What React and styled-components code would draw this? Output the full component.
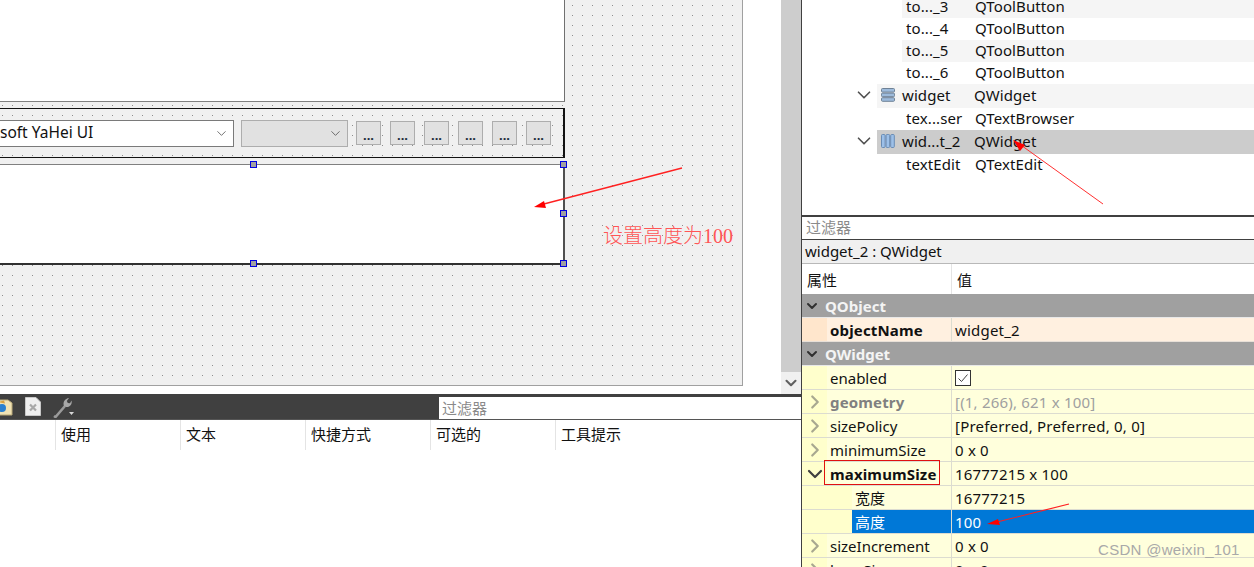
import React from "react";
import styled, { createGlobalStyle } from "styled-components";
import { ChevronDown, ChevronRight } from "lucide-react";

const GlobalStyle = createGlobalStyle`
  html, body {
    margin: 0;
    padding: 0;
    background: #fff;
  }
  body {
    font-family: "Noto Sans", "Noto Sans CJK SC", sans-serif;
    font-size: 15px;
    color: #111;
  }
`;

const Page = styled.div`
  position: relative;
  width: 1254px;
  height: 567px;
  overflow: hidden;
  display: flex;
  background: #fff;
`;

const LeftColumn = styled.div`
  width: 801px;
  flex: none;
  display: flex;
  flex-direction: column;
`;

const RightColumn = styled.div`
  flex: 1;
  min-width: 0;
  display: flex;
  flex-direction: column;
  border-left: 1px solid #404040;
`;

const DesignArea = styled.div`
  height: 394px;
  flex: none;
  display: flex;
  overflow: hidden;
`;

const Canvas = styled.div`
  width: 742px;
  height: 385px;
  flex: none;
  display: flex;
  flex-direction: column;
  background-color: #f0f0f0;
  background-image: radial-gradient(circle at 2.5px 5.5px, #8e8e8e 0.75px, transparent 0.8px);
  background-size: 10px 10px;
  border-right: 1px solid #a0a0a0;
  border-bottom: 1px solid #a0a0a0;
`;

const Gutter = styled.div`
  width: 38px;
  flex: none;
`;

const Scrollbar = styled.div`
  width: 20px;
  flex: none;
  display: flex;
  flex-direction: column;
`;

const ScrollThumb = styled.div`
  flex: 1;
  background: #cdcdcd;
`;

const ScrollButton = styled.div`
  height: 22px;
  display: flex;
  align-items: center;
  justify-content: center;
  background: #f0f0f0;
  color: #606060;
`;

const Form = styled.div`
  width: 565px;
  display: flex;
  flex-direction: column;
`;

const TopWidget = styled.div`
  height: 101px;
  background: #fff;
  border-right: 1px solid #707070;
  border-bottom: 1px solid #808080;
`;

const ToolRow = styled.div`
  height: 48px;
  margin-top: 6px;
  box-sizing: content-box;
  display: flex;
  align-items: center;
  border-top: 1px solid #111;
  border-bottom: 1px solid #111;
  border-right: 2px solid #111;
  overflow: hidden;
`;

const FontCombo = styled.div`
  width: 233px;
  height: 25px;
  flex: none;
  box-sizing: content-box;
  display: flex;
  align-items: center;
  justify-content: space-between;
  overflow: hidden;
  background: #fff;
  border: 1px solid #7a7a7a;
  border-left: 0;
  padding-right: 0;
`;

const ComboText = styled.span`
  margin-left: -41px;
  margin-bottom: 2px;
  font-size: 15.5px;
  white-space: nowrap;
`;

const SizeCombo = styled.div`
  width: 105px;
  height: 25px;
  flex: none;
  margin-left: 7px;
  display: flex;
  align-items: center;
  justify-content: flex-end;
  background: #e1e1e1;
  border: 1px solid #adadad;
`;

const ComboArrow = styled.span`
  display: flex;
  margin-right: 4px;
  color: #444;
`;

const DotsButton = styled.div`
  width: 23px;
  height: 22px;
  flex: none;
  margin-left: ${(p) => (p.$first ? "8px" : "9px")};
  display: flex;
  align-items: flex-end;
  justify-content: center;
  background: #e1e1e1;
  border: 1px solid #adadad;
  font-size: 13px;
  line-height: 18px;
  font-weight: 700;
  color: #1a2a3a;
`;

const SelectedWidget = styled.div`
  position: relative;
  height: 98px;
  margin-top: 6px;
  background: #fff;
  border-top: 1px solid #808080;
  border-right: 2px solid #505050;
  border-bottom: 2px solid #303030;
`;

const Handle = styled.span`
  position: absolute;
  width: 5px;
  height: 5px;
  background: #a0a0a0;
  border: 1px solid #0000e0;
  left: ${(p) => p.$x}px;
  top: ${(p) => p.$y}px;
`;

const ActionPanel = styled.div`
  flex: 1;
  display: flex;
  flex-direction: column;
`;

const ActionToolbar = styled.div`
  height: 25px;
  flex: none;
  display: flex;
  align-items: center;
  background: #404040;
  overflow: hidden;
`;

const ToolIcon = styled.svg`
  flex: none;
  margin-left: ${(p) => p.$gap}px;
`;

const ActionFilter = styled.div`
  width: 362px;
  height: 22px;
  margin-left: auto;
  margin-top: 2px;
  padding-left: 3px;
  box-sizing: border-box;
  background: #fff;
  color: #8a8a8a;
  font-size: 15px;
  line-height: 22px;
`;

const ActionHeader = styled.div`
  height: 30px;
  display: flex;
  border-top: 1px solid #555;
`;

const HeaderCell = styled.div`
  width: ${(p) => p.$width}px;
  flex: none;
  box-sizing: border-box;
  padding-left: 5px;
  border-right: ${(p) => (p.$last ? "0" : "1px solid #e4e4e4")};
  font-size: 15px;
  line-height: 28px;
`;

const TreePane = styled.div`
  height: 215px;
  flex: none;
  overflow: hidden;
  border-bottom: 2px solid #404040;
`;

const TreeScroll = styled.div`
  margin-top: -4px;
`;

const TreeLine = styled.div`
  display: flex;
  height: ${(p) => p.$height}px;
`;

const TreeGutter = styled.div`
  width: ${(p) => (p.$leaf ? 100 : 75)}px;
  flex: none;
  display: flex;
  align-items: center;
  justify-content: flex-end;
  padding-right: 2px;
  padding-bottom: 2px;
  box-sizing: border-box;
  color: #505050;
`;

const TreeBody = styled.div`
  flex: 1;
  display: flex;
  align-items: center;
  padding-bottom: 2px;
  box-sizing: border-box;
  background: ${(p) => (p.$selected ? "#cccccc" : p.$alt ? "#f5f5f5" : "#fff")};
`;

const TreeIcon = styled.svg`
  margin-left: 4px;
  flex: none;
`;

const TreeName = styled.span`
  width: ${(p) => p.$width}px;
  flex: none;
  padding-left: ${(p) => p.$pad}px;
  box-sizing: border-box;
  white-space: nowrap;
  letter-spacing: 0.1px;
`;

const TreeClass = styled.span`
  white-space: nowrap;
  letter-spacing: 0.1px;
`;

const FilterBox = styled.div`
  height: 22px;
  flex: none;
  padding-left: 4px;
  background: #fff;
  color: #8a8a8a;
  font-size: 15px;
  line-height: 21px;
  border-bottom: 1px solid #404040;
`;

const ClassLabel = styled.div`
  height: 23px;
  flex: none;
  padding-left: 3px;
  background: #f0f0f0;
  line-height: 23px;
  border-bottom: 1px solid #b8b8b8;
`;

const PropertyHeader = styled.div`
  height: 30px;
  flex: none;
  display: flex;
  line-height: 32px;
`;

const PropertyHeadCell = styled.div`
  box-sizing: border-box;
  padding-left: ${(p) => p.$pad}px;
  width: ${(p) => p.$width || "auto"};
  border-right: ${(p) => (p.$split ? "1px solid #e4e4e4" : "0")};
`;

const SectionRow = styled.div`
  height: 23px;
  flex: none;
  display: flex;
  align-items: center;
  background: #a0a0a0;
  border-bottom: 1px solid #e8e8e8;
  color: #f4f4f4;
  font-weight: 700;
`;

const SectionArrow = styled.span`
  width: 19px;
  margin-right: 4px;
  flex: none;
  display: flex;
  justify-content: center;
  color: #303030;
`;

const PropRow = styled.div`
  height: 23px;
  flex: none;
  display: flex;
  background: ${(p) => (p.$tone === "peach" ? "#fff0e0" : "#ffffdc")};
  border-bottom: 1px solid ${(p) => (p.$tone === "peach" ? "#e8e0d8" : "#dcdcd0")};
`;

const PropIndent = styled.div`
  width: ${(p) => (p.$deep ? 50 : 25)}px;
  flex: none;
  display: flex;
  align-items: center;
  justify-content: center;
  background: ${(p) => (p.$tone === "peach" ? "#ffe6cc" : "#ffffcc")};
  color: ${(p) => (p.$open ? "#404040" : "#a8a890")};
`;

const PropName = styled.div`
  flex: 1;
  display: flex;
  align-items: center;
  padding-left: 3px;
  white-space: nowrap;
  font-weight: ${(p) => (p.$bold ? 700 : 400)};
  letter-spacing: ${(p) => (p.$bold ? "0.15px" : "0")};
  color: ${(p) => (p.$muted ? "#808080" : p.$selected ? "#fff" : "#111")};
  background: ${(p) => (p.$selected ? "#0078d7" : "transparent")};
`;

const NameColumn = styled.div`
  width: 149px;
  flex: none;
  display: flex;
  border-right: 1px solid #dcdcd0;
`;

const PropValue = styled.div`
  flex: 1;
  display: flex;
  align-items: center;
  padding-left: 3px;
  white-space: nowrap;
  letter-spacing: 0.2px;
  color: ${(p) => (p.$muted ? "#a0a0a0" : p.$selected ? "#fff" : "#111")};
  background: ${(p) => (p.$selected ? "#0078d7" : "transparent")};
`;

const CheckBox = styled.span`
  width: 14px;
  height: 14px;
  display: flex;
  background: #fff;
  border: 1px solid #333;
`;

const Overlay = styled.svg`
  position: absolute;
  left: 0;
  top: 0;
  pointer-events: none;
`;

const Note = styled.div`
  position: absolute;
  left: 603px;
  top: 220px;
  color: #ff5555;
  font-family: "Liberation Serif", "Noto Sans CJK SC", serif;
  font-size: 20px;
  font-weight: 300;
  white-space: nowrap;
`;

const Watermark = styled.div`
  position: absolute;
  left: 1098px;
  top: 541px;
  color: #a9a9a9;
  font-family: "Liberation Sans", sans-serif;
  font-size: 15px;
  letter-spacing: 0.3px;
  white-space: nowrap;
`;

const treeRows = [
  { name: "to..._3", type: "QToolButton", height: 22, alt: true, leaf: true },
  { name: "to..._4", type: "QToolButton", height: 22, leaf: true },
  { name: "to..._5", type: "QToolButton", height: 22, alt: true, leaf: true },
  { name: "to..._6", type: "QToolButton", height: 22, leaf: true },
  { name: "widget", type: "QWidget", height: 24, alt: true, icon: "rows" },
  { name: "tex...ser", type: "QTextBrowser", height: 22, leaf: true },
  { name: "wid...t_2", type: "QWidget", height: 24, selected: true, icon: "cols" },
  { name: "textEdit", type: "QTextEdit", height: 22, leaf: true },
];

const headers = [
  { label: "", width: 56 },
  { label: "使用", width: 125 },
  { label: "文本", width: 125 },
  { label: "快捷方式", width: 125 },
  { label: "可选的", width: 125 },
  { label: "工具提示", width: 245, last: true },
];

function LayoutIcon({ kind }) {
  const bars = [0, 1, 2];
  return (
    <TreeIcon width="14" height="14" viewBox="0 0 14 14">
      {bars.map((i) =>
        kind === "rows" ? (
          <rect key={i} x="0.5" y={0.5 + i * 4.6} width="13" height="3.6" rx="1" fill="#9dbbdc" stroke="#6f8296" />
        ) : (
          <rect key={i} x={0.5 + i * 4.6} y="0.5" width="3.6" height="13" rx="1" fill="#9dc0e8" stroke="#6a8cb4" />
        )
      )}
    </TreeIcon>
  );
}

function Property({ name, value, bold, muted, arrow, deep, selected, tone, check }) {
  return (
    <PropRow $tone={tone}>
      <NameColumn>
        <PropIndent $deep={deep} $tone={tone} $open={arrow === "open"}>
          {arrow === "open" && <ChevronDown size={24} strokeWidth={2.2} />}
          {arrow === "closed" && <ChevronRight size={22} strokeWidth={2.4} />}
        </PropIndent>
        <PropName $bold={bold} $muted={muted} $selected={selected}>{name}</PropName>
      </NameColumn>
      <PropValue $muted={muted} $selected={selected}>
        {check ? (
          <CheckBox>
            <svg width="14" height="14" viewBox="0 0 14 14">
              <path d="M2.5 7.5 L5.5 10.5 L11.5 3.5" fill="none" stroke="#444" strokeWidth="1" />
            </svg>
          </CheckBox>
        ) : (
          value
        )}
      </PropValue>
    </PropRow>
  );
}

export default function App() {
  return (
    <Page>
      <GlobalStyle />
      <LeftColumn>
        <DesignArea>
          <Canvas>
            <Form>
              <TopWidget />
              <ToolRow>
                <FontCombo>
                  <ComboText>Microsoft YaHei UI</ComboText>
                  <ComboArrow><ChevronDown size={15} strokeWidth={1.2} /></ComboArrow>
                </FontCombo>
                <SizeCombo>
                  <ComboArrow><ChevronDown size={15} strokeWidth={1.2} /></ComboArrow>
                </SizeCombo>
                {[0, 1, 2, 3, 4, 5].map((i) => (
                  <DotsButton key={i} $first={i === 0}>...</DotsButton>
                ))}
              </ToolRow>
              <SelectedWidget>
                <Handle $x={250} $y={-4} />
                <Handle $x={560} $y={-4} />
                <Handle $x={560} $y={45} />
                <Handle $x={250} $y={95} />
                <Handle $x={560} $y={95} />
              </SelectedWidget>
            </Form>
          </Canvas>
          <Gutter />
          <Scrollbar>
            <ScrollThumb />
            <ScrollButton><ChevronDown size={18} strokeWidth={2.8} /></ScrollButton>
          </Scrollbar>
        </DesignArea>
        <ActionPanel>
          <ActionToolbar>
            <ToolIcon $gap={0} width="13" height="18" viewBox="0 0 13 18">
              <path d="M-4 2 H8 L12 5 V17 H-4 Z" fill="#f0e2b4" stroke="#b8a878" />
              <circle cx="2" cy="10" r="4" fill="#2a80d0" />
              <path d="M-2 4 L4 2.5 L5 5.5 Z" fill="#d8a040" />
            </ToolIcon>
            <ToolIcon $gap={12} width="16" height="19" viewBox="0 0 16 19">
              <path d="M0.5 0.5 H11 L15.5 5 V18.5 H0.5 Z" fill="#efefef" stroke="#c8c8c8" />
              <path d="M5 7.5 L11 13.5 M11 7.5 L5 13.5" stroke="#a8a8a8" strokeWidth="2.2" />
            </ToolIcon>
            <ToolIcon $gap={11} width="22" height="22" viewBox="0 0 22 22">
              <path d="M2 20 L3.5 21 L13 10" fill="none" stroke="#9a9a9a" strokeWidth="2.6" />
              <path d="M12 10 C10.5 6 13 2.5 17 2 L14.8 5 L15.8 7 L18 7.2 L19.5 4.5 C20.5 8 18 11.5 14 11 Z" fill="#a8a8a8" />
              <path d="M17 16 H22 L19.5 19 Z" fill="#d8d8d8" />
            </ToolIcon>
            <ActionFilter>过滤器</ActionFilter>
          </ActionToolbar>
          <ActionHeader>
            {headers.map((h) => (
              <HeaderCell key={h.width + h.label} $width={h.width} $last={h.last}>{h.label}</HeaderCell>
            ))}
          </ActionHeader>
        </ActionPanel>
      </LeftColumn>
      <RightColumn>
        <TreePane>
          <TreeScroll>
            {treeRows.map((row) => (
              <TreeLine key={row.name} $height={row.height}>
                <TreeGutter $leaf={row.leaf}>
                  {!row.leaf && <ChevronDown size={22} strokeWidth={1.8} />}
                </TreeGutter>
                <TreeBody $alt={row.alt} $selected={row.selected}>
                  {row.icon && <LayoutIcon kind={row.icon} />}
                  <TreeName $width={row.leaf ? 73 : 79} $pad={row.leaf ? 4 : 7}>{row.name}</TreeName>
                  <TreeClass>{row.type}</TreeClass>
                </TreeBody>
              </TreeLine>
            ))}
          </TreeScroll>
        </TreePane>
        <FilterBox>过滤器</FilterBox>
        <ClassLabel>widget_2 : QWidget</ClassLabel>
        <PropertyHeader>
          <PropertyHeadCell $pad={5} $width="150px" $split>属性</PropertyHeadCell>
          <PropertyHeadCell $pad={5}>值</PropertyHeadCell>
        </PropertyHeader>
        <SectionRow>
          <SectionArrow><ChevronDown size={16} strokeWidth={3} /></SectionArrow>QObject
        </SectionRow>
        <Property name="objectName" value="widget_2" bold tone="peach" />
        <SectionRow>
          <SectionArrow><ChevronDown size={16} strokeWidth={3} /></SectionArrow>QWidget
        </SectionRow>
        <Property name="enabled" check />
        <Property name="geometry" value="[(1, 266), 621 x 100]" bold muted arrow="closed" />
        <Property name="sizePolicy" value="[Preferred, Preferred, 0, 0]" arrow="closed" />
        <Property name="minimumSize" value="0 x 0" arrow="closed" />
        <Property name="maximumSize" value="16777215 x 100" bold arrow="open" />
        <Property name="宽度" value="16777215" deep />
        <Property name="高度" value="100" deep selected />
        <Property name="sizeIncrement" value="0 x 0" arrow="closed" />
        <Property name="baseSize" value="0 x 0" arrow="closed" />
      </RightColumn>

      <Overlay width="1254" height="567" viewBox="0 0 1254 567">
        <line x1="682" y1="168" x2="540" y2="205" stroke="#ff2020" strokeWidth="1.3" />
        <path d="M534 207 L544 201 L546 208 Z" fill="#ff0000" />
        <line x1="1103" y1="204" x2="1018" y2="143" stroke="#ff3030" strokeWidth="1" />
        <path d="M1013 140 L1025 145 L1020 151 Z" fill="#ff0000" />
        <line x1="1069" y1="504" x2="993" y2="523" stroke="#ff2020" strokeWidth="1.2" />
        <path d="M987 524 L998 519 L1000 525 Z" fill="#ff0000" />
        <rect x="824.5" y="460.5" width="115" height="24" fill="none" stroke="#e01010" strokeWidth="1" />
      </Overlay>
      <Note>设置高度为100</Note>
      <Watermark>CSDN @weixin_101</Watermark>
    </Page>
  );
}
